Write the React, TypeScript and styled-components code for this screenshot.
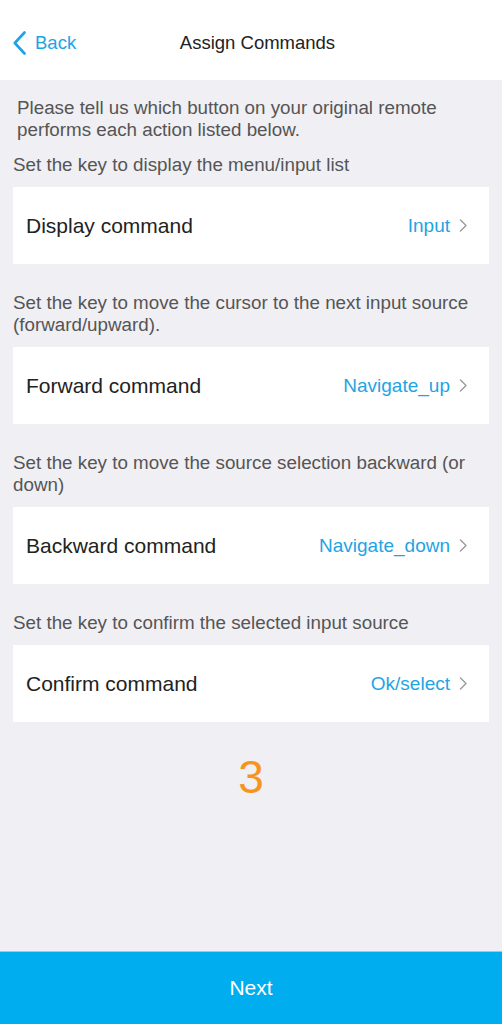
import styled, { createGlobalStyle } from "styled-components";

const GlobalStyle = createGlobalStyle`
    html, body {
        margin: 0;
        padding: 0;
        background: #f0eff4;
    }
    body {
        font-family: "Liberation Sans", Arial, sans-serif;
        -webkit-font-smoothing: antialiased;
    }
`;

const BLUE = "#1ea4e4";

const Page = styled.div`
    display: flex;
    flex-direction: column;
    width: 502px;
    height: 1024px;
    background: #f0eff4;
`;

const Header = styled.header`
    display: grid;
    grid-template-columns: 1fr auto 1fr;
    align-items: center;
    height: 80px;
    padding: 5px 13px 0;
    box-sizing: border-box;
    background: #ffffff;
`;

const BackButton = styled.button`
    display: flex;
    align-items: center;
    gap: 9px;
    justify-self: start;
    padding: 0;
    border: none;
    background: none;
    color: ${BLUE};
    font-family: inherit;
    font-size: 18.5px;
    cursor: pointer;
`;

const Title = styled.h1`
    margin: 0 0 0 13px;
    font-size: 18.5px;
    font-weight: normal;
    color: #222222;
`;

const Content = styled.main`
    flex: 1;
    display: flex;
    flex-direction: column;
    padding: 0 13px;
`;

const Intro = styled.p`
    margin: 17px 0 0;
    padding-left: 4px;
    font-size: 18.8px;
    line-height: 22px;
    color: #555555;
`;

const Caption = styled.p<{ $first?: boolean }>`
    margin: ${(p) => (p.$first ? "13px" : "28px")} 0 11px;
    font-size: 18.8px;
    line-height: 22px;
    color: #555555;
`;

const Card = styled.div`
    display: flex;
    align-items: center;
    justify-content: space-between;
    height: 77px;
    padding: 0 21px 0 13px;
    background: #ffffff;
    cursor: pointer;
`;

const Label = styled.span`
    font-size: 21px;
    color: #222222;
`;

const Value = styled.span`
    display: flex;
    align-items: center;
    gap: 9px;
    font-size: 19px;
    color: ${BLUE};
`;

const Counter = styled.div`
    margin-top: 32px;
    text-align: center;
    font-size: 46px;
    line-height: 46px;
    color: #f7941d;
`;

const NextButton = styled.button`
    height: 73px;
    padding: 0;
    border: none;
    border-top: 1px solid #7fd3f5;
    background: #00aeef;
    color: #ffffff;
    font-family: inherit;
    font-size: 21px;
    cursor: pointer;
`;

const Chevron = () => (
    <svg width="9" height="13" viewBox="0 0 9 13" fill="none">
        <path d="M1.5 1 L7 6.5 L1.5 12" stroke="#9a9a9a" strokeWidth="1.4" strokeLinecap="round" strokeLinejoin="round" />
    </svg>
);

const BackChevron = () => (
    <svg width="13" height="24" viewBox="0 0 13 24" fill="none">
        <path d="M11.5 1.5 L1.8 12 L11.5 22.5" stroke={BLUE} strokeWidth="2.6" strokeLinecap="round" strokeLinejoin="round" />
    </svg>
);

const commands = [
    { caption: "Set the key to display the menu/input list", label: "Display command", value: "Input" },
    {
        caption: "Set the key to move the cursor to the next input source (forward/upward).",
        label: "Forward command",
        value: "Navigate_up",
    },
    {
        caption: "Set the key to move the source selection backward (or down)",
        label: "Backward command",
        value: "Navigate_down",
    },
    { caption: "Set the key to confirm the selected input source", label: "Confirm command", value: "Ok/select" },
];

export default function App() {
    return (
        <Page>
            <GlobalStyle />
            <Header>
                <BackButton>
                    <BackChevron />
                    Back
                </BackButton>
                <Title>Assign Commands</Title>
                <span />
            </Header>
            <Content>
                <Intro>
                    Please tell us which button on your original remote performs each action listed below.
                </Intro>
                {commands.map((c, i) => (
                    <div key={c.label}>
                        <Caption $first={i === 0}>{c.caption}</Caption>
                        <Card>
                            <Label>{c.label}</Label>
                            <Value>
                                {c.value}
                                <Chevron />
                            </Value>
                        </Card>
                    </div>
                ))}
                <Counter>3</Counter>
            </Content>
            <NextButton>Next</NextButton>
        </Page>
    );
}
